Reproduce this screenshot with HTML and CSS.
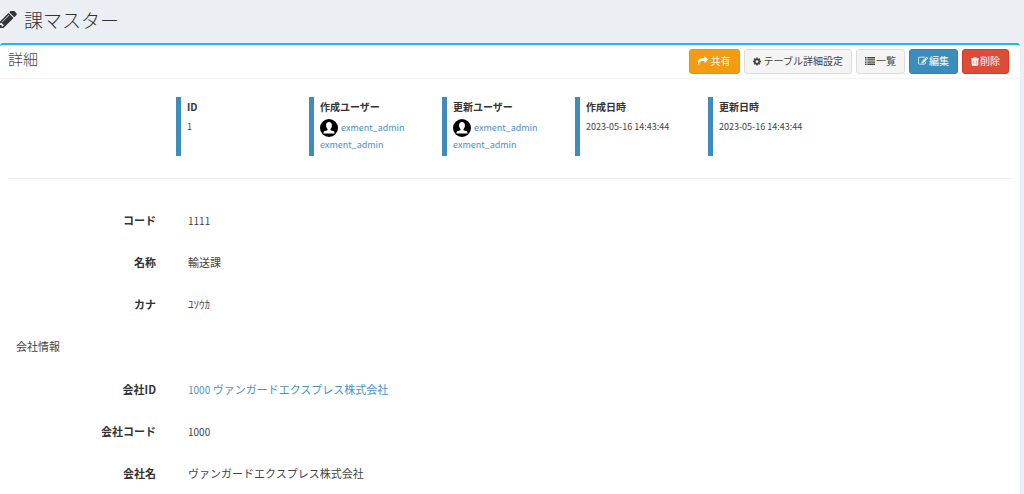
FILE: index.html
```html
<!DOCTYPE html>
<html lang="ja">
<head>
<meta charset="utf-8">
<meta name="viewport" content="width=device-width, initial-scale=1">
<title>課マスター</title>
<link rel="stylesheet" href="styles.css">
</head>
<body>
<svg class="defs" aria-hidden="true">
  <symbol id="user" viewBox="0 0 18 18"><circle cx="9" cy="9" r="9" fill="#000"/><path fill="#fff" d="M9 3c1.900 0 2.900 1.300 2.900 3.200 0 1.700-.6 2.900-1.400 3.700v1.300l2.600.8c1 .4 1.400 1 1.500 2.400H3.400c.1-1.400.5-2 1.500-2.400l2.600-.8V9.900C6.700 9.100 6.100 7.900 6.100 6.200 6.100 4.300 7.100 3 9 3z"/></symbol>
</svg>
<header class="page-header">
  <svg class="title-icon" viewBox="256 256 1408 1408" aria-hidden="true"><path d="M491 1536l91-91-235-235-91 91v107h128v128h107zm523-928q0-22-22-22-10 0-17 7l-542 542q-7 7-7 17 0 22 22 22 10 0 17-7l542-542q7-7 7-17zm-54-192l416 416-832 832h-416v-416zm683 96q0 53-37 90l-166 166-416-416 166-165q36-38 90-38 53 0 91 38l235 234q37 39 37 91z"/></svg>
  <h1>課マスター</h1>
</header>
<main class="box">
  <div class="box-header">
    <h2>詳細</h2>
    <div class="tools">
      <button type="button" class="btn share"><svg class="wide" viewBox="0 0 1792 1792" aria-hidden="true"><path d="M1792 640q0 26-19 45l-512 512q-19 19-45 19t-45-19-19-45v-256h-224q-98 0-175.500 6t-154 21.500-133 42.500-105.500 69.500-80 101-48.500 138.500-17.500 181q0 55 5 123 0 6 2.500 23.500t2.500 26.500q0 15-8.500 25t-23.500 10q-16 0-28-17-7-9-13-22t-13.500-30-10.500-24q-127-285-127-451 0-199 53-333 162-403 875-403h224v-256q0-26 19-45t45-19 45 19l512 512q19 19 19 45z"/></svg>共有</button>
      <button type="button" class="btn settings"><svg viewBox="128 128 1536 1536" aria-hidden="true"><path d="M1152 896q0-106-75-181t-181-75-181 75-75 181 75 181 181 75 181-75 75-181zm512-109v222q0 12-8 23t-20 13l-185 28q-19 54-39 91 35 50 107 138 10 12 10 25t-9 23q-27 37-99 108t-94 71q-12 0-26-9l-138-108q-44 23-91 38-16 136-29 186-7 28-36 28h-222q-14 0-24.500-8.500t-11.500-21.500l-28-184q-49-16-90-37l-141 107q-10 9-25 9-14 0-25-11-126-114-165-168-7-10-7-23 0-12 8-23 15-21 51-66.500t54-70.500q-27-50-41-99l-183-27q-13-2-21-12.500t-8-23.500v-222q0-12 8-23t19-13l186-28q14-46 39-92-40-57-107-138-10-12-10-24 0-10 9-23 26-36 98.500-107.500t94.500-71.500q13 0 26 10l138 107q44-23 91-38 16-136 29-186 7-28 36-28h222q14 0 24.500 8.500t11.500 21.500l28 184q49 16 90 37l142-107q9-9 24-9 13 0 25 10 129 119 165 170 7 8 7 22 0 12-8 23-15 21-51 66.500t-54 70.500q26 50 41 98l183 28q13 2 21 12.500t8 23.500z"/></svg>テーブル詳細設定</button>
      <button type="button" class="btn compact"><svg class="wide" viewBox="0 0 10 10" aria-hidden="true"><path d="M0 1h1.600v1.400H0zM2.300 1H10v1.400H2.300zM0 3.200h1.600v1.400H0zM2.300 3.200H10v1.400H2.300zM0 5.400h1.600v1.400H0zM2.300 5.400H10v1.400H2.300zM0 7.600h1.600V9H0zM2.300 7.600H10V9H2.300z"/></svg>一覧</button>
      <button type="button" class="btn compact edit"><svg class="wide" viewBox="0 0 1792 1792" aria-hidden="true"><path d="M888 1184l116-116-152-152-116 116v56h96v96h56zm440-720q-16-16-33 1l-350 350q-17 17-1 33t33-1l350-350q17-17 1-33zm80 594v190q0 119-84.500 203.500t-203.500 84.500h-832q-119 0-203.500-84.500t-84.500-203.500v-832q0-119 84.500-203.500t203.500-84.500h832q63 0 117 25 15 7 18 23 3 17-9 29l-49 49q-14 14-32 8-23-6-45-6h-832q-66 0-113 47t-47 113v832q0 66 47 113t113 47h832q66 0 113-47t47-113v-126q0-13 9-22l64-64q15-15 35-7t20 29zm-96-738l288 288-672 672h-288v-288zm444 132l-92 92-288-288 92-92q28-28 68-28t68 28l152 152q28 28 28 68t-28 68z"/></svg>編集</button>
      <button type="button" class="btn compact delete"><svg viewBox="0 0 8 9" aria-hidden="true"><path fill-rule="evenodd" d="M2.400 1.200L2.800.2h2.400l.4 1H8v1h-.7v5.600c0 .6-.4 1-1 1H1.700c-.6 0-1-.4-1-1V2.200H0v-1zm.8 0h1.600L4.600.8H3.400zM2.300 3.600v3.600h.4v-3.600zm1.500 0v3.600h.4v-3.600zm1.500 0v3.600h.4v-3.600z"/></svg>削除</button>
    </div>
  </div>
  <section class="info">
    <div class="info-item"><h3>ID</h3><p>1</p></div>
    <div class="info-item"><h3>作成ユーザー</h3><a href="#"><svg class="avatar" aria-hidden="true"><use href="#user"/></svg>exment_admin</a><a href="#">exment_admin</a></div>
    <div class="info-item"><h3>更新ユーザー</h3><a href="#"><svg class="avatar" aria-hidden="true"><use href="#user"/></svg>exment_admin</a><a href="#">exment_admin</a></div>
    <div class="info-item"><h3>作成日時</h3><p>2023-05-16 14:43:44</p></div>
    <div class="info-item"><h3>更新日時</h3><p>2023-05-16 14:43:44</p></div>
  </section>
  <dl class="fields">
    <div class="row"><dt>コード</dt><dd><span class="num">1111</span></dd></div>
    <div class="row"><dt>名称</dt><dd>輸送課</dd></div>
    <div class="row"><dt>カナ</dt><dd>ﾕｿｳｶ</dd></div>
  </dl>
  <h3 class="section-title">会社情報</h3>
  <dl class="fields">
    <div class="row"><dt>会社ID</dt><dd><a href="#"><span class="num">1000</span> ヴァンガードエクスプレス株式会社</a></dd></div>
    <div class="row"><dt>会社コード</dt><dd><span class="num">1000</span></dd></div>
    <div class="row"><dt>会社名</dt><dd>ヴァンガードエクスプレス株式会社</dd></div>
  </dl>
</main>
</body>
</html>
```
FILE: styles.css
```css
* { box-sizing: border-box; }
body {
  margin: 0;
  background: #ebeef3;
  color: #444;
  font: 11px/16px "Noto Sans CJK JP", sans-serif;
}
h1, h2, h3, p, dl, dd { margin: 0; font-weight: 400; }
a { color: #4c8fc3; text-decoration: none; }
svg { fill: currentColor; flex: none; }
.defs { display: none; }
.page-header {
  display: flex;
  align-items: center;
  gap: 7px;
  height: 43px;
  padding-bottom: 4px;
  color: #333;
}
.title-icon { width: 17px; height: 17px; }
h1 { font-size: 19px; font-weight: 300; line-height: 28px; }
.box {
  margin-right: 4px;
  padding-bottom: 4px;
  border-top: 2px solid #13bfe9;
  border-radius: 3px 3px 0 0;
  background: #fff;
}
.box-header {
  display: flex;
  justify-content: space-between;
  align-items: center;
  height: 34px;
  padding: 0 11px 1px 8px;
  border-bottom: 1px solid #f4f4f4;
}
h2 { padding-bottom: 4px; font-size: 15px; font-weight: 300; line-height: 20px; }
.tools { display: flex; gap: 4px; }
.btn {
  display: flex;
  align-items: center;
  gap: 3px;
  height: 25px;
  padding: 0 8px;
  border: 1px solid #ddd;
  border-radius: 3px;
  background: #f4f4f4;
  color: #444;
  font: 10px/16px "Noto Sans CJK JP", sans-serif;
}
.btn svg { width: 8px; height: 9px; }
.btn .wide { width: 10px; height: 10px; }
.compact { gap: 1px; }
.share { border-color: #e8940f; background: #f39c12; color: #fff; }
.edit { border-color: #367fa9; background: #3c8dbc; color: #fff; }
.delete { border-color: #d73925; background: #dd4b39; color: #fff; }
.info {
  display: grid;
  grid-template-columns: repeat(5, 1fr);
  margin: 0 8px;
  padding: 18px 171px 22px 168px;
  border-bottom: 1px solid #eee;
}
.info-item {
  display: flex;
  flex-direction: column;
  height: 59px;
  padding: 2px 0 0 6px;
  border-left: 5px solid #3c8dbc;
}
.info-item h3 {
  margin-bottom: 4px;
  color: #333;
  font-size: 10px;
  font-weight: 700;
}
.info-item p { font-size: 9px; }
.info-item a {
  display: flex;
  align-items: center;
  gap: 3px;
  font-size: 9px;
}
.avatar { width: 18px; height: 18px; }
.fields { padding-left: 8px; }
.info + .fields { padding-top: 20px; }
.row {
  display: grid;
  grid-template-columns: 148px 1fr;
  gap: 32px;
  align-items: center;
  min-height: 42px;
}
dt { color: #333; font-weight: 700; text-align: right; }
.num { font-size: 10px; }
.section-title { padding: 13px 16px 14px; font-size: 11px; }
```
